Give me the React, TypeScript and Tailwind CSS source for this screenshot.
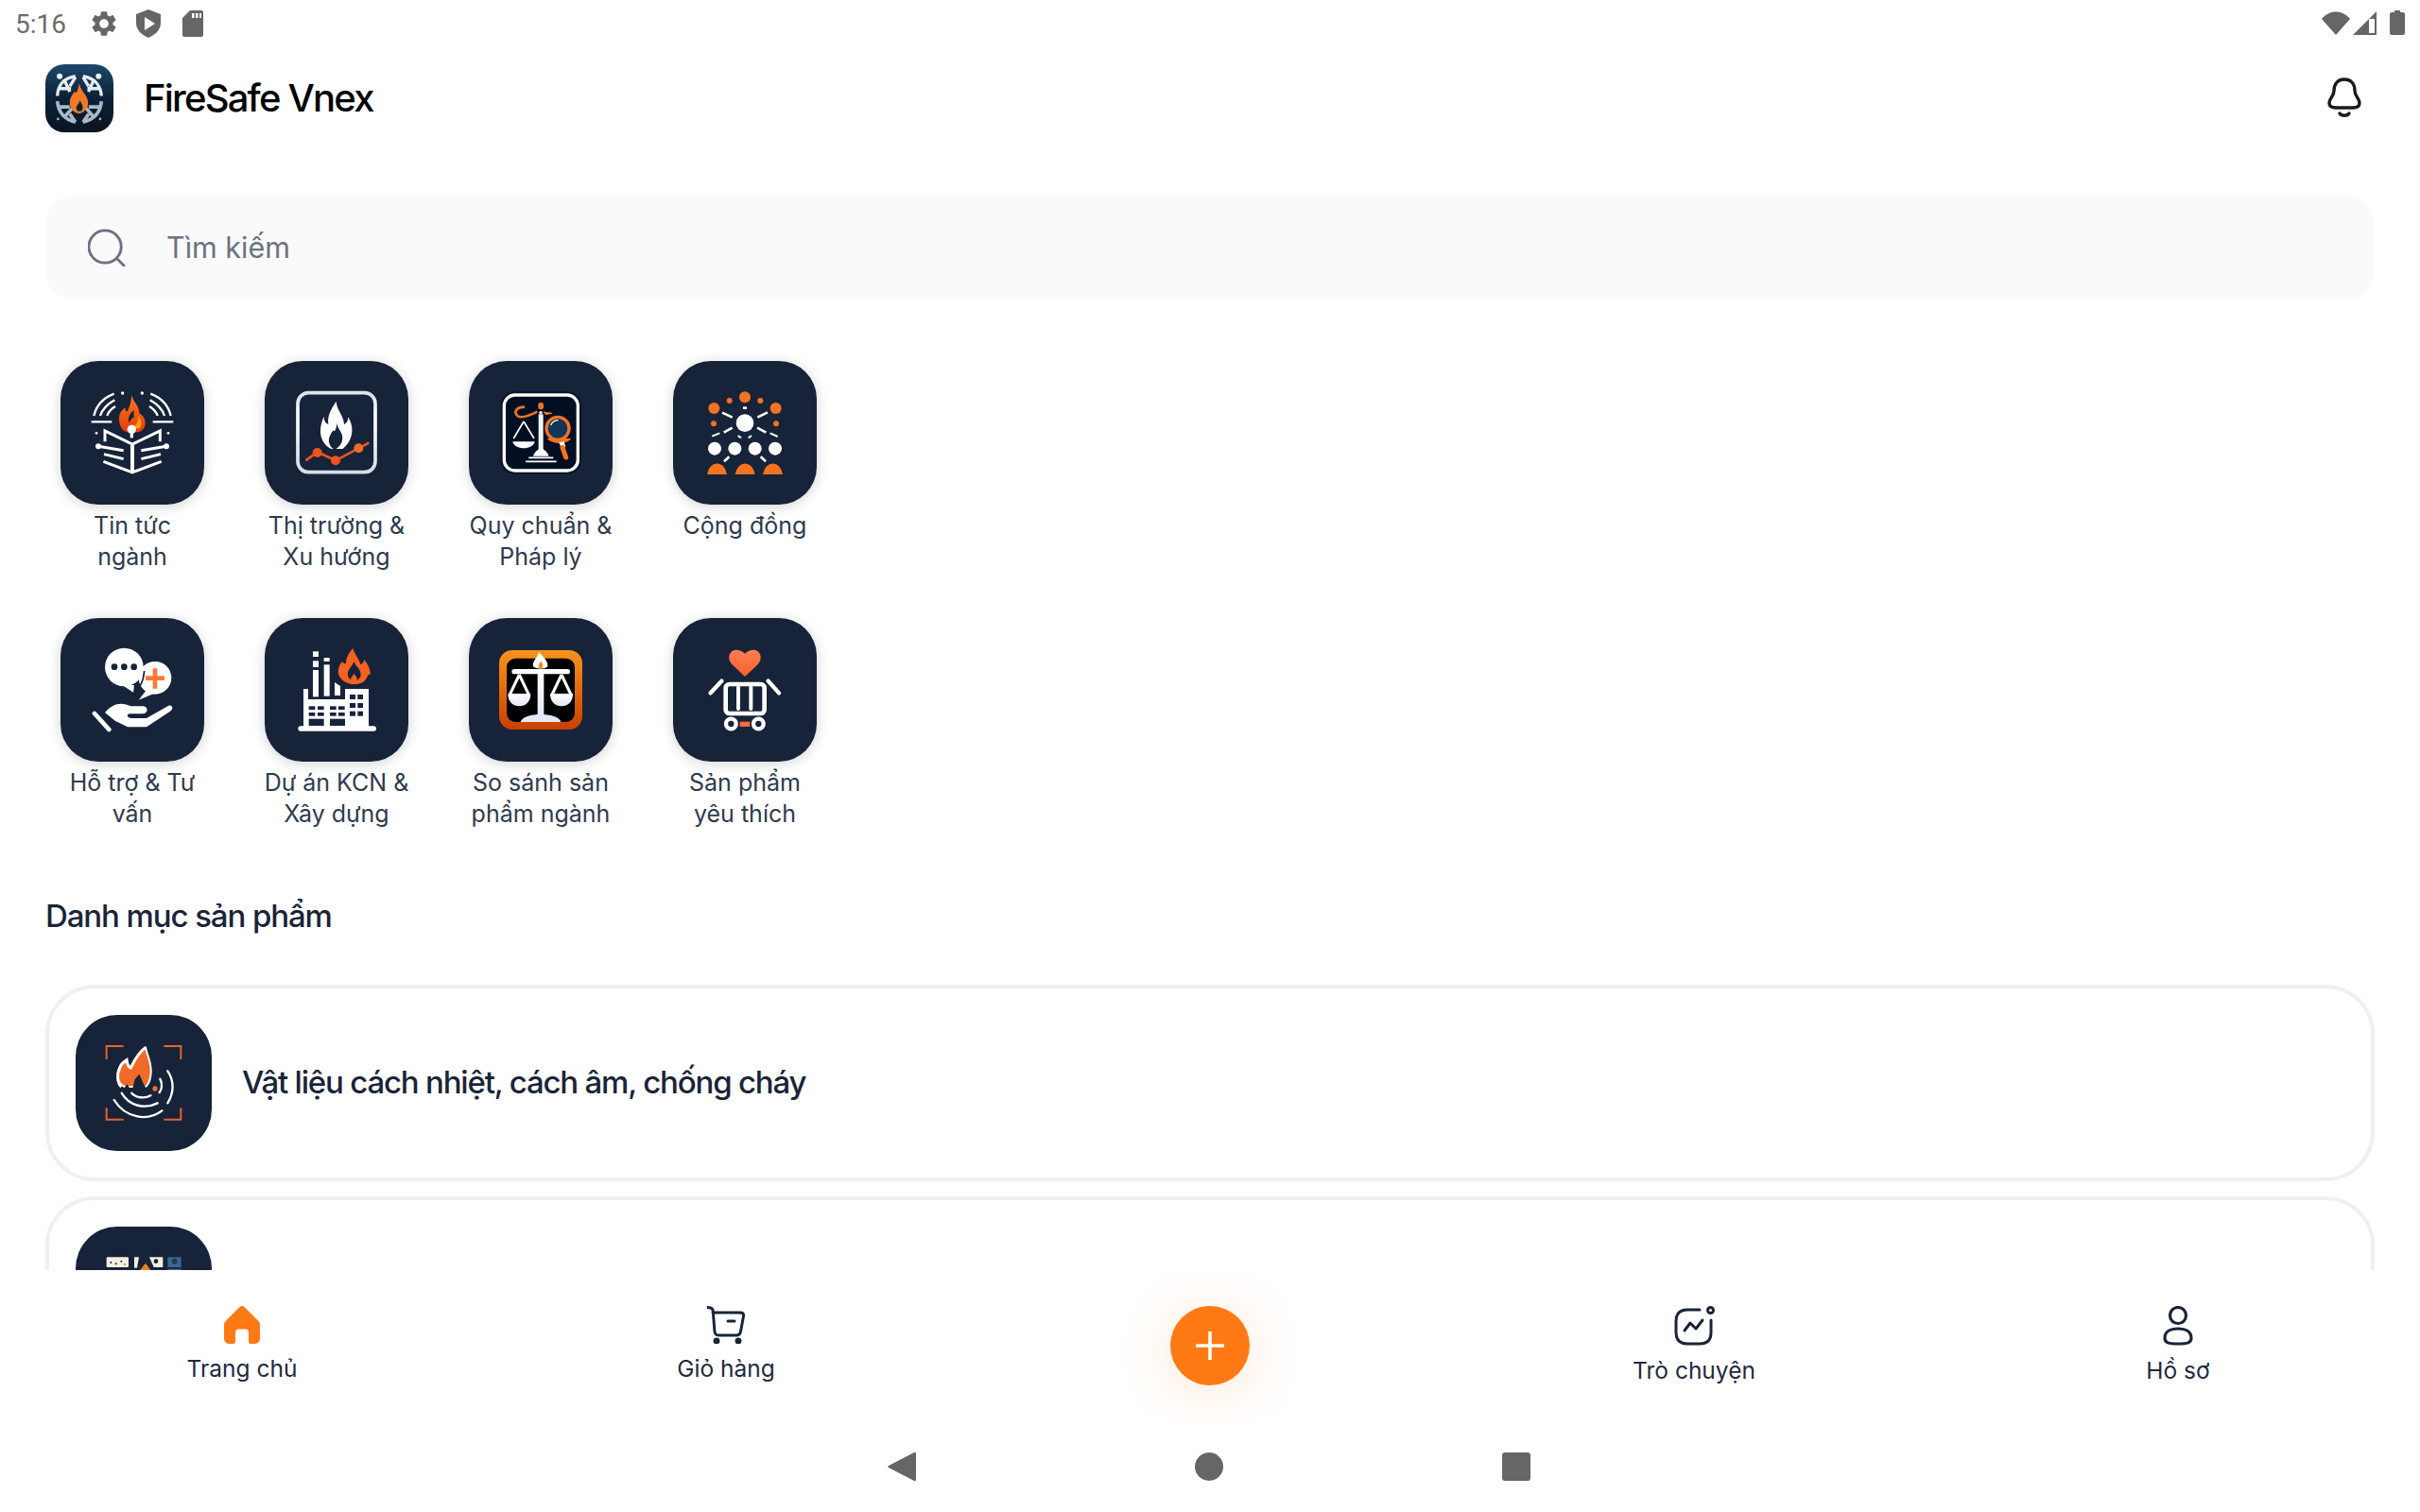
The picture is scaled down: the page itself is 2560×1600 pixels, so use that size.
import React from 'react';

const NAVY = '#172339';
const ORANGE = '#f47321';

const Tile: React.FC<{ box: string; children: React.ReactNode; lines: string[] }> = ({ box, children, lines }) => (
  <div className="flex flex-col items-center">
    <div className="h-[152px] w-[152px] rounded-[40px] bg-[#172339] shadow-[0_2px_14px_rgba(0,0,0,0.18)]">
      <svg viewBox={box} className="h-full w-full">
        {children}
      </svg>
    </div>
    <div className="mt-[6px] h-[66px] whitespace-nowrap text-center text-[25px] leading-[32.5px] text-[#2f3a4e]">
      {lines.map((l) => (
        <div key={l}>{l}</div>
      ))}
    </div>
  </div>
);

const StatusBar = () => (
  <div className="flex h-[56px] items-start justify-between pl-[16px] pr-[16px] pt-[9px]">
    <div className="flex items-center">
      <span className="mt-[2px] w-[54px] font-['Roboto',sans-serif] text-[28px] leading-[28px] text-[#6b6b6b]">5:16</span>
      <svg viewBox="0 0 24 24" className="ml-[24px] h-[32px] w-[32px] fill-[#666]">
        <path d="M19.14 12.94c.04-.3.06-.61.06-.94 0-.32-.02-.64-.07-.94l2.03-1.58c.18-.14.23-.41.12-.61l-1.92-3.32c-.12-.22-.37-.29-.59-.22l-2.39.96c-.5-.38-1.03-.7-1.62-.94l-.36-2.54c-.04-.24-.24-.41-.48-.41h-3.84c-.24 0-.43.17-.47.41l-.36 2.54c-.59.24-1.13.57-1.62.94l-2.39-.96c-.22-.08-.47 0-.59.22L2.74 8.87c-.12.21-.08.47.12.61l2.03 1.58c-.05.3-.09.63-.09.94s.02.64.07.94l-2.03 1.58c-.18.14-.23.41-.12.61l1.92 3.32c.12.22.37.29.59.22l2.39-.96c.5.38 1.03.7 1.62.94l.36 2.54c.05.24.24.41.48.41h3.84c.24 0 .44-.17.47-.41l.36-2.54c.59-.24 1.13-.56 1.62-.94l2.39.96c.22.08.47 0 .59-.22l1.92-3.32c.12-.22.07-.47-.12-.61l-2.01-1.58zM12 15.6c-1.98 0-3.6-1.62-3.6-3.6s1.62-3.6 3.6-3.6 3.6 1.62 3.6 3.6-1.62 3.6-3.6 3.6z" />
      </svg>
      <svg viewBox="0 0 26 30" className="ml-[18px] h-[30px] w-[26px]">
        <path d="M13 0 L26 5 V14 C26 22 20 27 13 30 C6 27 0 22 0 14 V5 Z" fill="#666" />
        <path d="M9 8 L20 15 L9 22 Z" fill="#fff" />
      </svg>
      <svg viewBox="0 0 22 28" className="ml-[23px] h-[28px] w-[22px]">
        <path d="M8 0 H20 C21 0 22 1 22 2 V26 C22 27 21 28 20 28 H2 C1 28 0 27 0 26 V8 Z" fill="#666" />
        <path d="M10 3 h2.5 v5 h-2.5z M14 3 h2.5 v5 h-2.5z M18 3 h2 v5 h-2z" fill="#fff" />
      </svg>
    </div>
    <div className="flex items-center pt-[2px]">
      <svg viewBox="0 0 30 25" className="h-[25px] w-[30px]">
        <path d="M15 25 L0 8 C8 -2 22 -2 30 8 Z" fill="#666" />
      </svg>
      <svg viewBox="0 0 25 25" className="ml-[3px] h-[25px] w-[25px]">
        <path d="M25 0 V25 H0 Z" fill="#666" />
        <path d="M17 8 H23 V23 H17 Z" fill="#fff" />
      </svg>
      <svg viewBox="0 0 16 26" className="ml-[14px] h-[26px] w-[16px]">
        <path d="M5 0 H11 V2 H14 C15 2 16 3 16 4 V24 C16 25 15 26 14 26 H2 C1 26 0 25 0 24 V4 C0 3 1 2 2 2 H5 Z" fill="#666" />
      </svg>
    </div>
  </div>
);

const Logo = () => (
  <div className="h-[72px] w-[72px] overflow-hidden rounded-[20px] bg-gradient-to-b from-[#1e4a6c] via-[#0b2137] to-[#0a1422]">
    <svg viewBox="145 205 215 215" className="h-full w-full">
      <circle cx="190" cy="243" r="9" fill="#e8eef2" />
      <circle cx="313" cy="243" r="9" fill="#e8eef2" />
      <circle cx="185" cy="378" r="4" fill="#a9b8c4" />
      <circle cx="318" cy="378" r="4" fill="#a9b8c4" />
      <g fill="none" stroke="#e6ecf0" strokeWidth="10">
        <path d="M183 305 C184 270 205 248 240 243" />
        <path d="M322 305 C320 270 298 248 264 243" />
        <path d="M205 255 L222 292 M186 282 H226" />
        <path d="M298 255 L281 292 M318 282 H278" />
        <path d="M240 246 L222 275 M264 246 L282 275" />
      </g>
      <g fill="none" stroke="#a8b9c6" strokeWidth="11">
        <path d="M183 322 C186 358 208 380 240 388" />
        <path d="M322 322 C319 358 296 380 264 388" />
        <path d="M186 340 H222 M318 340 H282" />
        <path d="M203 374 L232 342 M300 374 L272 342" />
        <path d="M222 362 L240 388 M282 362 L264 388" />
      </g>
      <path d="M252 265 C258 295 282 305 280 330 C278 350 262 360 252 360 C235 360 222 345 222 325 C222 310 232 300 238 290 C240 300 246 298 252 265 Z" fill="#f2792a" />
      <path d="M254 318 C258 330 266 335 262 348 C258 356 246 356 243 346 C241 335 252 332 254 318 Z" fill="#0c2236" />
    </svg>
  </div>
);

const NewsIcon = () => (
  <>
    <defs>
      <linearGradient id="newsFlame" x1="0" y1="0" x2="0" y2="1">
        <stop offset="0" stopColor="#f47a1c" />
        <stop offset="1" stopColor="#e83c0a" />
      </linearGradient>
    </defs>
    <g fill="none" stroke="#fff" strokeWidth="7">
      <path d="M178 240 Q190 190 242 170" />
      <path d="M198 240 Q208 210 244 190" />
      <path d="M220 240 Q226 222 246 210" />
      <path d="M422 240 Q410 190 358 170" />
      <path d="M402 240 Q392 210 356 190" />
      <path d="M380 240 Q374 222 354 210" />
      <path d="M170 259 H235 M365 259 H430" />
    </g>
    <circle cx="269" cy="168" r="5" fill="#fff" />
    <circle cx="331" cy="168" r="5" fill="#fff" />
    <circle cx="186" cy="295" r="4" fill="#fff" />
    <circle cx="414" cy="295" r="4" fill="#fff" />
    <path d="M298 175 C304 200 322 205 322 232 C335 238 344 255 340 272 C334 288 322 292 312 292 L285 292 C268 290 258 272 258 250 C258 228 268 222 278 212 C276 222 280 226 284 226 C292 212 296 195 298 175 Z" fill="url(#newsFlame)" />
    <path d="M305 222 C292 232 284 248 290 262 C296 252 300 246 306 244 C304 238 304 230 305 222 Z" fill={NAVY} />
    <path d="M318 240 C326 250 332 262 326 276 C320 284 312 282 308 272 C316 264 320 252 318 240 Z" fill="#ff9a1f" />
    <circle cx="298" cy="283" r="14" fill="#fff" />
    <rect x="293" y="290" width="10" height="20" fill="#fff" />
    <g fill="none" stroke="#fff" strokeWidth="9">
      <path d="M213 322 V288 L300 330 L388 288 V322" />
      <path d="M192 337 L272 350 M408 337 L328 350" />
      <path d="M210 362 L272 377 M390 362 L328 377" />
      <path d="M208 385 L300 420 L392 385" />
    </g>
    <rect x="294" y="330" width="12" height="92" fill="#fff" />
    <circle cx="192" cy="337" r="9" fill="#fff" />
    <circle cx="408" cy="337" r="9" fill="#fff" />
  </>
);

const MarketIcon = () => (
  <>
    <defs>
      <linearGradient id="marketFrame" x1="0" y1="0" x2="0" y2="1">
        <stop offset="0" stopColor="#dbe3ec" />
        <stop offset="0.3" stopColor="#fff" />
        <stop offset="1" stopColor="#d5dde6" />
      </linearGradient>
    </defs>
    <rect x="825" y="167" width="246" height="252" rx="34" fill="none" stroke="url(#marketFrame)" strokeWidth="11" />
    <path d="M947 194 C948 222 972 240 972 268 C982 262 986 254 984 244 C1004 272 1004 315 968 345 L930 345 C892 322 890 282 908 242 C908 256 914 264 922 266 C918 238 932 218 947 194 Z" fill="#fff" />
    <path d="M949 262 C950 282 972 296 966 318 C962 334 952 342 946 345 L938 345 C926 338 920 320 926 306 C930 296 934 292 937 286 C941 294 948 284 949 262 Z" fill={NAVY} />
    <path d="M853 380 L887 355 L945 382 L1018 343 L1048 327" fill="none" stroke="#ee5320" strokeWidth="8" strokeLinecap="round" />
    <circle cx="887" cy="357" r="15" fill="#ee5320" />
    <circle cx="945" cy="382" r="15" fill="#ee5320" />
    <circle cx="1018" cy="343" r="15" fill="#f06a2a" />
  </>
);

const LawIcon = () => (
  <>
    <rect x="208" y="163" width="257" height="262" rx="45" fill="#0a1528" />
    <rect x="220" y="174" width="234" height="240" rx="34" fill="#020f22" stroke="#fff" strokeWidth="10" />
    <path d="M325 227 C300 240 275 250 262 240 C250 228 258 212 285 212" fill="none" stroke={ORANGE} strokeWidth="8" />
    <path d="M345 228 L372 232 L352 236 Z" fill={ORANGE} stroke={ORANGE} strokeWidth="3" />
    <rect x="328" y="198" width="17" height="22" rx="7" fill={ORANGE} />
    <rect x="329" y="235" width="15" height="110" fill="#f4f4f4" />
    <circle cx="336" cy="230" r="5" fill="#fff" />
    <path d="M312 368 C318 352 326 350 330 345 H344 C348 350 356 352 362 368 Z" fill="#fff" />
    <path d="M298 373 H376 M288 385 H386" stroke="#fff" strokeWidth="5" />
    <path d="M282 258 L250 312 M282 258 L315 312" stroke="#fff" strokeWidth="5" />
    <path d="M247 322 H317 C312 350 252 350 247 322 Z" fill="#fff" />
    <circle cx="390" cy="280" r="36" fill="#123659" stroke={ORANGE} strokeWidth="10" />
    <path d="M368 270 C372 260 380 254 392 254" stroke="#fff" strokeWidth="4" fill="none" />
    <path d="M355 312 H432 C420 332 375 332 355 312 Z" fill={ORANGE} />
    <path d="M394 325 L410 322 L415 340 L400 340 Z" fill="#fff" />
    <path d="M405 340 L416 372" stroke={ORANGE} strokeWidth="15" strokeLinecap="round" />
  </>
);

const CommunityIcon = () => (
  <>
    <g fill={ORANGE}>
      <circle cx="984" cy="181" r="18" />
      <circle cx="935" cy="192" r="9" />
      <circle cx="1033" cy="192" r="9" />
      <circle cx="886" cy="216" r="18" />
      <circle cx="1082" cy="216" r="18" />
      <circle cx="885" cy="265" r="9" />
      <circle cx="1083" cy="265" r="9" />
      <path d="M864 426 A32 42 0 0 1 927 426 Z" />
      <path d="M953 426 A32 42 0 0 1 1016 426 Z" />
      <path d="M1041 426 A32 42 0 0 1 1104 426 Z" />
    </g>
    <g fill="#fff">
      <circle cx="984" cy="263" r="28" />
      <circle cx="888" cy="344" r="21" />
      <circle cx="952" cy="344" r="21" />
      <circle cx="1016" cy="344" r="21" />
      <circle cx="1080" cy="344" r="21" />
    </g>
    <g stroke="#fff" strokeWidth="8" fill="none">
      <path d="M978 215 H990" />
      <path d="M912 230 L944 245 M1024 245 L1056 229" />
      <path d="M917 293 L944 278 M1023 278 L1051 293" />
      <path d="M880 305 L904 295 M1064 295 L1088 306" strokeWidth="6" />
      <path d="M962 303 L972 310 M995 310 L1005 303" strokeWidth="6" />
      <path d="M918 385 L934 370 M1034 370 L1050 385" />
    </g>
  </>
);

const SupportIcon = () => (
  <>
    <circle cx="372" cy="232" r="52" fill="#fff" />
    <path d="M345 270 L320 302 L368 282 Z" fill="#fff" />
    <path d="M342 226 H402 V240 H342 Z M365 202 H379 V266 H365 Z" fill="#ff7a33" />
    <path d="M265 255 L305 282 L308 252 Z" fill="#fff" stroke={NAVY} strokeWidth="4" />
    <circle cx="274" cy="198" r="61" fill="#fff" />
    <path d="M338 210 C335 250 320 265 305 282" fill="none" stroke={NAVY} strokeWidth="5" />
    <circle cx="243" cy="197" r="10" fill={NAVY} />
    <circle cx="274" cy="197" r="10" fill={NAVY} />
    <circle cx="305" cy="197" r="10" fill={NAVY} />
    <path d="M180 345 L226 396" stroke="#fff" strokeWidth="14" strokeLinecap="round" />
    <path d="M213 342 C235 315 265 306 295 322 L335 322 C352 324 350 346 332 346 L290 346 C280 350 284 358 295 360 L345 360 L415 320 C428 318 432 330 420 338 L345 388 H285 L245 368 Z" fill="#fff" />
  </>
);

const FactoryIcon = () => (
  <>
    <g fill="#fff">
      <rect x="826" y="385" width="248" height="16" rx="8" />
      <path d="M843 267 H858 V300 H975 V267 H1050 V388 H843 Z" />
      <rect x="873" y="207" width="18" height="85" />
      <rect x="873" y="178" width="18" height="20" />
      <rect x="873" y="148" width="18" height="17" />
      <rect x="908" y="190" width="18" height="100" />
      <rect x="908" y="168" width="18" height="12" />
      <path d="M942 246 L960 258 V288 H942 Z" />
    </g>
    <g fill={NAVY}>
      <rect x="860" y="322" width="20" height="11" />
      <rect x="888" y="322" width="20" height="11" />
      <rect x="860" y="342" width="20" height="11" />
      <rect x="888" y="342" width="20" height="11" />
      <rect x="860" y="362" width="48" height="22" />
      <rect x="927" y="322" width="20" height="11" />
      <rect x="954" y="322" width="20" height="11" />
      <rect x="927" y="342" width="20" height="11" />
      <rect x="954" y="342" width="20" height="11" />
      <rect x="927" y="362" width="48" height="22" />
      <rect x="990" y="285" width="18" height="15" />
      <rect x="1015" y="285" width="17" height="15" />
      <rect x="990" y="312" width="18" height="15" />
      <rect x="1015" y="312" width="17" height="15" />
      <rect x="990" y="338" width="18" height="15" />
      <rect x="1015" y="338" width="17" height="15" />
    </g>
    <path d="M1000 138 C1005 158 1020 170 1024 190 C1030 188 1036 180 1036 174 C1048 190 1056 205 1055 222 C1050 220 1048 222 1045 230 C1035 250 1015 252 1004 252 C985 252 965 245 955 222 C950 205 958 190 966 180 C970 186 974 188 978 186 C978 165 990 150 1000 138 Z" fill="#f4621f" />
    <path d="M1003 180 C1000 195 978 205 985 228 C990 245 1018 245 1024 228 C1030 208 1008 195 1003 180 Z" fill={NAVY} />
    <path d="M1004 218 C1008 226 1016 232 1012 240 C1008 250 998 250 994 240 C990 232 1000 226 1004 218 Z" fill="#f4621f" />
  </>
);

const CompareIcon = () => (
  <>
    <defs>
      <linearGradient id="compareFrame" x1="0" y1="0" x2="0" y2="1">
        <stop offset="0" stopColor="#f7941d" />
        <stop offset="1" stopColor="#c93f00" />
      </linearGradient>
      <linearGradient id="comparePan" x1="0" y1="0" x2="0" y2="1">
        <stop offset="0" stopColor="#fff" />
        <stop offset="1" stopColor="#e2e9f4" />
      </linearGradient>
    </defs>
    <rect x="204" y="144" width="264" height="252" rx="42" fill="url(#compareFrame)" />
    <rect x="228" y="170" width="216" height="202" rx="28" fill="#000" />
    <rect x="244" y="204" width="185" height="16" rx="8" fill="#fff" />
    <rect x="326" y="205" width="20" height="145" fill="url(#comparePan)" />
    <path d="M330 150 C345 165 360 180 358 195 C356 205 316 205 312 195 C308 180 325 170 330 150 Z" fill="#fff" />
    <path d="M336 178 C340 186 346 192 342 198 C338 204 330 202 329 196 C328 190 334 186 336 178 Z" fill="#f7860f" />
    <path d="M268 222 L238 285 M268 222 L298 285 M402 222 L372 285 M402 222 L432 285" fill="none" stroke="#fff" strokeWidth="9" />
    <path d="M232 282 H304 C306 335 230 335 232 282 Z" fill="url(#comparePan)" />
    <path d="M366 282 H438 C440 335 364 335 366 282 Z" fill="url(#comparePan)" />
    <path d="M272 372 C280 340 392 340 400 372 Z" fill="#e2e9f4" />
  </>
);

const FavouriteIcon = () => (
  <>
    <defs>
      <linearGradient id="heartFill" x1="0" y1="0" x2="0" y2="1">
        <stop offset="0" stopColor="#ff7d55" />
        <stop offset="1" stopColor="#f4612a" />
      </linearGradient>
    </defs>
    <path d="M984 228 L942 188 C918 160 950 125 984 155 C1018 125 1050 160 1026 188 Z" fill="url(#heartFill)" />
    <path d="M875 280 L910 242 M1058 242 L1092 280" stroke="#fff" strokeWidth="13" strokeLinecap="round" />
    <rect x="923" y="252" width="123" height="93" rx="12" fill="none" stroke="#fff" strokeWidth="14" />
    <path d="M963 262 V330 M1003 262 V330" stroke="#fff" strokeWidth="12" strokeLinecap="round" />
    <circle cx="940" cy="378" r="16" fill="none" stroke="#fff" strokeWidth="13" />
    <circle cx="1027" cy="378" r="16" fill="none" stroke="#fff" strokeWidth="13" />
    <rect x="968" y="371" width="32" height="16" fill="#ff6a39" />
  </>
);

const InsulationIcon = () => (
  <>
    <path d="M248 243 V201 H302 M430 201 H484 V243 M248 397 V434 H302 M430 434 H484 V397" fill="none" stroke="#e8622a" strokeWidth="6" />
    <path d="M372 205 C378 235 395 260 388 295 C385 315 378 325 372 330 L325 330 L305 330 C282 320 280 290 290 270 C295 255 305 250 312 245 C314 260 318 268 325 270 C335 250 345 225 372 205 Z" fill="#f26a2a" stroke="#fff" strokeWidth="6" strokeLinejoin="round" />
    <path d="M372 205 C345 225 335 250 325 270 C318 268 314 260 312 245 C305 250 295 255 290 270 C280 290 282 320 295 330" fill="none" stroke="#fff" strokeWidth="9" />
    <path d="M302 336 L314 322 L322 336 Z M330 338 L338 306 L352 290 L366 322 L376 338 Z" fill={NAVY} />
    <circle cx="402" cy="336" r="8" fill="#f26a2a" />
    <g fill="none" stroke="#fff" strokeWidth="7" strokeLinecap="round">
      <path d="M328 350 C342 366 370 368 388 358" />
      <path d="M296 350 C320 392 370 402 410 382" />
      <path d="M272 372 C310 432 380 440 424 406" />
      <path d="M418 305 C426 320 424 338 416 348" />
      <path d="M442 280 C464 312 462 350 442 382" />
    </g>
  </>
);

const SecondCardIcon = () => (
  <>
    <rect x="248" y="871" width="70" height="32" rx="3" fill="#f4efdf" />
    <g fill={NAVY}>
      <circle cx="262" cy="888" r="3" />
      <circle cx="278" cy="892" r="3" />
      <circle cx="295" cy="884" r="3" />
      <circle cx="306" cy="894" r="2" />
    </g>
    <path d="M336 871 H351 L345 905 H336 Z" fill="#f4efdf" />
    <path d="M372 890 L390 915 H352 Z" fill="#f47a1c" />
    <path d="M384 871 H427 V903 H398 Z" fill="#f4efdf" />
    <circle cx="405" cy="884" r="7" fill={NAVY} />
    <rect x="442" y="871" width="43" height="32" fill="#3a688c" />
    <circle cx="464" cy="884" r="9" fill="#1c3a55" />
    <rect x="442" y="908" width="43" height="8" fill="#3a688c" />
  </>
);

const CategoryCard: React.FC<{ box: string; title?: string; children: React.ReactNode }> = ({ box, title, children }) => (
  <div className="flex h-[208px] shrink-0 items-center gap-[32px] rounded-[52px] border-4 border-[#f0f0f0] bg-white px-[28px]">
    <div className="h-[144px] w-[144px] rounded-[44px] bg-[#172339]">
      <svg viewBox={box} className="h-full w-full">
        {children}
      </svg>
    </div>
    {title && <span className="text-[33px] font-medium tracking-[-1.2px] text-[#1a2438]">{title}</span>}
  </div>
);

const BottomNav = () => (
  <div className="grid h-[160px] shrink-0 grid-cols-5 overflow-hidden bg-white pt-[38px] text-[#1f2a3f]">
    <div className="flex flex-col items-center">
      <svg viewBox="0 0 38 40" className="h-[40px] w-[38px]">
        <path d="M16.5 1 C18 -.3 20 -.3 21.5 1 L36 15.5 C37.3 17 38 18 38 20 V34 C38 37.5 36 40 32 40 H28 C26 40 26 38 26 36 V28 C26 26 24.5 24.5 23 24.5 H15 C13.5 24.5 12 26 12 28 V36 C12 38 12 40 10 40 H6 C2 40 0 37.5 0 34 V20 C0 18 .7 17 2 15.5 Z" fill="#ff7a14" />
      </svg>
      <span className="mt-[9px] text-[24.5px] leading-[34px]">Trang chủ</span>
    </div>
    <div className="flex flex-col items-center">
      <svg viewBox="0 0 40 40" className="h-[40px] w-[40px]" fill="none" stroke="#1a2438" strokeWidth="3" strokeLinecap="round">
        <path d="M1 1.5 L3.5 2 C5 2.3 6 3.5 6.2 5 L8 27 C8.2 29.5 10 31 12.5 31 H31 C33.5 31 35 29.5 35.5 27 L38.5 11 C39 8 37.5 7 35 7 H6" />
        <path d="M22 16 H29" />
        <circle cx="10" cy="37" r="2" fill="#1a2438" />
        <circle cx="33" cy="37" r="2" fill="#1a2438" />
      </svg>
      <span className="mt-[9px] text-[24.5px] leading-[34px]">Giỏ hàng</span>
    </div>
    <div className="flex flex-col items-center">
      <div className="flex h-[84px] w-[84px] items-center justify-center rounded-full bg-[#ff7a14] shadow-[0_6px_60px_rgba(255,122,20,0.2)]">
        <svg viewBox="0 0 30 30" className="h-[30px] w-[30px]" stroke="#fff" strokeWidth="3.5">
          <path d="M15 0 V30 M0 15 H30" />
        </svg>
      </div>
    </div>
    <div className="flex flex-col items-center">
      <svg viewBox="0 0 45 42" className="ml-[2px] h-[42px] w-[45px]" fill="none" stroke="#1a2438" strokeWidth="3" strokeLinecap="round" strokeLinejoin="round">
        <path d="M27 4 H14 C6 4 2 8 2 16 V28 C2 36 6 40 14 40 H27 C35 40 39 36 39 28 V15" />
        <circle cx="38.5" cy="4.5" r="3" />
        <path d="M11 26 L17 18 L23 24 L30 15" />
      </svg>
      <span className="mt-[9px] text-[24.5px] leading-[34px]">Trò chuyện</span>
    </div>
    <div className="flex flex-col items-center">
      <svg viewBox="0 0 32 42" className="h-[42px] w-[32px]" fill="none" stroke="#1a2438" strokeWidth="3.2">
        <circle cx="16" cy="10" r="8.5" />
        <path d="M2 34 C2 27 8 24 16 24 C24 24 30 27 30 34 C30 39 26 40 16 40 C6 40 2 39 2 34 Z" />
      </svg>
      <span className="mt-[9px] text-[24.5px] leading-[34px]">Hồ sơ</span>
    </div>
  </div>
);

const SystemNav = () => (
  <div className="flex h-[96px] shrink-0 items-center justify-center gap-[295px] bg-white">
    <svg viewBox="0 0 30 32" className="-ml-[2px] h-[32px] w-[30px]">
      <path d="M28 1 C29 0.5 30 1 30 2 V30 C30 31 29 31.5 28 31 L1 17 C0 16.5 0 15.5 1 15 Z" fill="#666" />
    </svg>
    <div className="h-[30px] w-[30px] rounded-full bg-[#666]" />
    <div className="h-[30px] w-[30px] rounded-[3px] bg-[#666]" />
  </div>
);

export default function App() {
  return (
    <div className="flex h-[1600px] w-[2560px] flex-col overflow-hidden bg-white font-['Inter',sans-serif]">
      <StatusBar />
      <div className="flex min-h-0 flex-1 flex-col overflow-hidden px-[48px]">
        <div className="mt-[12px] flex shrink-0 items-center justify-between">
          <div className="flex items-center gap-[32px]">
            <Logo />
            <span className="text-[40px] font-medium tracking-[-1.8px] text-black">FireSafe Vnex</span>
          </div>
          <svg viewBox="0 0 36 44" className="mr-[14px] h-[44px] w-[36px]" fill="none" stroke="#1a1a1a" strokeWidth="3.4" strokeLinecap="round">
            <path d="M18 2 C26 2 29 8 29 14 C29 20 34 22 34 27 C34 31 31 32 27 32 H9 C5 32 2 31 2 27 C2 22 7 20 7 14 C7 8 10 2 18 2 Z" />
            <path d="M13 38 C15 41 21 41 23 38" />
          </svg>
        </div>
        <div className="mt-[66px] flex h-[112px] shrink-0 items-center rounded-[32px] bg-[#fafafa] pl-[45px]">
          <svg viewBox="0 0 42 42" className="h-[40px] w-[40px]" fill="none" stroke="#6b7280" strokeWidth="3">
            <circle cx="19" cy="20" r="18" />
            <path d="M32 33 L40 41" strokeLinecap="round" />
          </svg>
          <span className="ml-[43px] text-[30.5px] text-[#6b7280]">Tìm kiếm</span>
        </div>
        <div className="mt-[64px] grid shrink-0 grid-cols-[repeat(4,184px)] gap-x-[32px] gap-y-[48px]">
          <Tile box="72 66 456 456" lines={['Tin tức', 'ngành']}><NewsIcon /></Tile>
          <Tile box="720 66 456 456" lines={['Thị trường &', 'Xu hướng']}><MarketIcon /></Tile>
          <Tile box="108 66 456 456" lines={['Quy chuẩn &', 'Pháp lý']}><LawIcon /></Tile>
          <Tile box="756 66 456 456" lines={['Cộng đồng']}><CommunityIcon /></Tile>
          <Tile box="72 42 456 456" lines={['Hỗ trợ & Tư', 'vấn']}><SupportIcon /></Tile>
          <Tile box="720 42 456 456" lines={['Dự án KCN &', 'Xây dựng']}><FactoryIcon /></Tile>
          <Tile box="108 42 456 456" lines={['So sánh sản', 'phẩm ngành']}><CompareIcon /></Tile>
          <Tile box="756 42 456 456" lines={['Sản phẩm', 'yêu thích']}><FavouriteIcon /></Tile>
        </div>
        <h2 className="mt-[69px] shrink-0 text-[33px] font-medium leading-[44px] tracking-[-1.1px] text-[#1a2438]">Danh mục sản phẩm</h2>
        <div className="mt-[51px] flex shrink-0 flex-col gap-[16px]">
          <CategoryCard box="150 102 432 432" title="Vật liệu cách nhiệt, cách âm, chống cháy"><InsulationIcon /></CategoryCard>
          <CategoryCard box="150 774 432 432"><SecondCardIcon /></CategoryCard>
        </div>
      </div>
      <BottomNav />
      <SystemNav />
    </div>
  );
}
